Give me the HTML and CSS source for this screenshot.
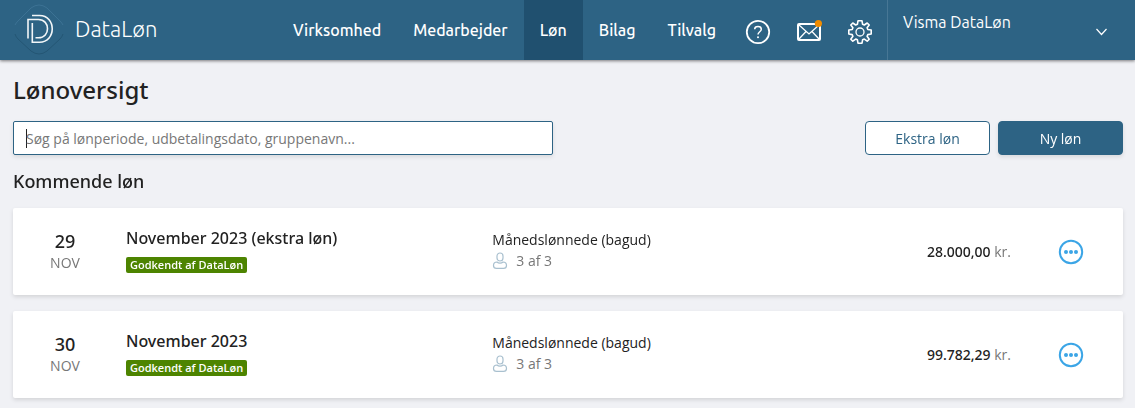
FILE: index.html
```html
<!DOCTYPE html>
<html lang="da">
<head>
    <meta charset="UTF-8">
    <meta name="viewport" content="width=device-width, initial-scale=1.0">
    <title>DataLøn - Lønoversigt</title>
    <link rel="stylesheet" href="styles.css">
</head>
<body>
    <header class="topbar">
        <a href="#" class="brand">
            <svg class="logo" width="50" height="52" viewBox="0 0 50 52" fill="none">
                <path d="M1 21 Q2 19 4 17 L17 4 Q25 -2 33 4 L46 17 Q48 19 49 21" stroke="#3c7294"/>
                <path d="M1 30 Q2 33 4 35 L17 47 Q25 53 33 47 L46 35 Q48 33 49 30" stroke="#245674"/>
                <g stroke="#f2f6f8" stroke-width="1.6">
                    <path d="M14 34.500 V15.500 H24.500 C36.500 15.500 36.500 33.800 24.500 33.800 H21.500"/>
                    <path d="M18 11.500 H25.500 C42.500 11.500 42.500 38.200 25.500 38.200 H18.300 V19"/>
                </g>
            </svg>
            <span class="brand-name">DataLøn</span>
        </a>

        <nav class="menu">
            <a href="#">Virksomhed</a>
            <a href="#">Medarbejder</a>
            <a href="#" class="active">Løn</a>
            <a href="#">Bilag</a>
            <a href="#">Tilvalg</a>
        </nav>

        <div class="tools">
            <button type="button" class="tool" aria-label="Hjælp">
                <svg width="26" height="26" viewBox="0 0 26 26" fill="none" stroke="#fff">
                    <circle cx="13" cy="13" r="11.2" stroke-width="1.8"/>
                    <path d="M9.700 10.300 C9.700 6.700 16.300 6.700 16.300 10.300 C16.300 12.800 13 12.800 13 15.600" stroke-width="1.500"/>
                    <circle cx="13" cy="18.300" r="1" fill="#fff" stroke="none"/>
                </svg>
            </button>
            <button type="button" class="tool" aria-label="Beskeder">
                <svg width="26" height="26" viewBox="0 0 26 26" fill="none" stroke="#fff">
                    <rect x="2" y="5" width="22" height="16" rx="1" stroke-width="2"/>
                    <path d="M3 6 L13 15 L23 6 M3 20 L10 12.500 M23 20 L16 12.500" stroke-width="1.300"/>
                    <circle cx="22.400" cy="4.500" r="3.600" fill="#f08c00" stroke="none"/>
                </svg>
            </button>
            <button type="button" class="tool" aria-label="Indstillinger">
                <svg width="26" height="26" viewBox="0 0 26 26" fill="none" stroke="#fff" stroke-linejoin="round">
                    <path d="M11 1.800 H15 L15.600 5.300 L17.300 6 L20.200 4 L22.200 6 L20.100 8.800 L20.800 10.500 L24.200 11 V15 L20.800 15.600 L20.100 17.200 L22.200 20.200 L20.200 22.200 L17.300 20.100 L15.600 20.800 L15 24.200 H11 L10.400 20.800 L8.700 20.100 L5.800 22.200 L3.800 20.200 L5.900 17.200 L5.200 15.600 L1.800 15 V11 L5.200 10.500 L5.900 8.800 L3.800 6 L5.800 4 L8.700 6 L10.400 5.300 Z" stroke-width="1.600"/>
                    <circle cx="13" cy="13" r="4" stroke-width="1.300"/>
                </svg>
            </button>
        </div>

        <button type="button" class="company">
            <span>Visma DataLøn</span>
            <svg width="13" height="8" viewBox="0 0 13 8" fill="none" stroke="#fff" stroke-width="1.200">
                <path d="M1.500 1 L6.500 6.500 L11.500 1"/>
            </svg>
        </button>
    </header>

    <main class="content">
        <h1>Lønoversigt</h1>

        <div class="toolbar">
            <input type="text" class="search" aria-label="Søg" placeholder="Søg på lønperiode, udbetalingsdato, gruppenavn..." autofocus>
            <div class="actions">
                <button type="button" class="btn">Ekstra løn</button>
                <button type="button" class="btn btn-primary">Ny løn</button>
            </div>
        </div>

        <h2>Kommende løn</h2>

        <div class="payroll">
            <div class="date">
                <span class="day">29</span>
                <span class="month">NOV</span>
            </div>
            <div class="period">
                <h3>November 2023 (ekstra løn)</h3>
                <span class="status">Godkendt af DataLøn</span>
            </div>
            <div class="group">
                <p>Månedslønnede (bagud)</p>
                <p class="count">
                    <svg width="16" height="18" viewBox="0 0 16 18" fill="none" stroke="#a9c0cf" stroke-width="1.200">
                        <rect x="5" y="1" width="6" height="8" rx="3"/>
                        <path d="M5 10 C2.500 10 1.500 11.500 1.500 13.500 C1.500 15.500 2.500 16.400 4.500 16.400 H11.500 C13.500 16.400 14.500 15.500 14.500 13.500 C14.500 11.500 13.500 10 11 10 C9.500 11.500 6.500 11.500 5 10 Z"/>
                    </svg>
                    3 af 3
                </p>
            </div>
            <div class="amount"><strong>28.000,00</strong> kr.</div>
            <button type="button" class="more" aria-label="Flere handlinger">
                <svg width="26" height="26" viewBox="0 0 26 26" fill="#3ba5e6">
                    <circle cx="13" cy="13" r="11.200" fill="none" stroke="#3ba5e6" stroke-width="2"/>
                    <circle cx="8" cy="13" r="2"/>
                    <circle cx="13" cy="13" r="2"/>
                    <circle cx="18" cy="13" r="2"/>
                </svg>
            </button>
        </div>

        <div class="payroll">
            <div class="date">
                <span class="day">30</span>
                <span class="month">NOV</span>
            </div>
            <div class="period">
                <h3>November 2023</h3>
                <span class="status">Godkendt af DataLøn</span>
            </div>
            <div class="group">
                <p>Månedslønnede (bagud)</p>
                <p class="count">
                    <svg width="16" height="18" viewBox="0 0 16 18" fill="none" stroke="#a9c0cf" stroke-width="1.200">
                        <rect x="5" y="1" width="6" height="8" rx="3"/>
                        <path d="M5 10 C2.500 10 1.500 11.500 1.500 13.500 C1.500 15.500 2.500 16.400 4.500 16.400 H11.500 C13.500 16.400 14.500 15.500 14.500 13.500 C14.500 11.500 13.500 10 11 10 C9.500 11.500 6.500 11.500 5 10 Z"/>
                    </svg>
                    3 af 3
                </p>
            </div>
            <div class="amount"><strong>99.782,29</strong> kr.</div>
            <button type="button" class="more" aria-label="Flere handlinger">
                <svg width="26" height="26" viewBox="0 0 26 26" fill="#3ba5e6">
                    <circle cx="13" cy="13" r="11.200" fill="none" stroke="#3ba5e6" stroke-width="2"/>
                    <circle cx="8" cy="13" r="2"/>
                    <circle cx="13" cy="13" r="2"/>
                    <circle cx="18" cy="13" r="2"/>
                </svg>
            </button>
        </div>
    </main>
</body>
</html>
```
FILE: styles.css
```css
* {
    box-sizing: border-box;
}

body {
    margin: 0;
    font-family: "Open Sans", sans-serif;
    font-size: 14px;
    color: #222;
    background-color: #f0f1f5;
}

h1, h2, h3, p {
    margin: 0;
}

h1, h2, h3, .day, .amount strong {
    font-family: "Noto Sans", sans-serif;
    font-weight: 500;
}

button {
    font-family: inherit;
    cursor: pointer;
}

.topbar {
    display: flex;
    height: 60px;
    background-color: #2d6384;
    box-shadow: 0 1px 3px rgba(0, 0, 0, 0.5);
    font-family: Ubuntu, "Noto Sans", sans-serif;
}

.topbar svg {
    display: block;
}

.brand {
    display: flex;
    align-items: center;
    gap: 11px;
    padding-left: 14px;
    color: #fff;
    text-decoration: none;
}

.brand-name {
    font-size: 22px;
    line-height: 24px;
    font-weight: 300;
    padding-bottom: 3px;
}

.menu {
    display: flex;
    margin-left: auto;
}

.menu a {
    padding: 0 16px;
    line-height: 60px;
    font-size: 16px;
    font-weight: 500;
    color: #fff;
    text-decoration: none;
}

.menu .active {
    background-color: #20506f;
}

.tools {
    display: flex;
    align-items: center;
    gap: 25px;
    padding: 4px 14px 0 13px;
}

.tool,
.more {
    padding: 0;
    border: none;
    background: none;
}

.company {
    display: flex;
    justify-content: space-between;
    width: 248px;
    padding: 13px 27px 0 15px;
    border: none;
    border-left: 1px solid #477795;
    background: none;
    font-size: 16px;
    color: #fff;
}

.company svg {
    margin-top: 15px;
}

.content {
    padding: 12px 12px 11px 13px;
}

h1 {
    font-size: 24px;
    line-height: 36px;
}

.toolbar {
    display: flex;
    justify-content: space-between;
    margin-top: 13px;
}

.search {
    width: 540px;
    height: 34px;
    padding: 0 12px;
    border: 1px solid #2d6384;
    border-radius: 2px;
    outline: none;
    background: linear-gradient(#222, #222) 12px center / 1px 19px no-repeat #fff;
    box-shadow: 0 2px 4px rgba(0, 0, 0, 0.1);
    font-family: inherit;
    font-size: 14px;
}

.search::placeholder {
    color: #777;
}

.actions {
    display: flex;
    gap: 8px;
}

.btn {
    width: 125px;
    height: 34px;
    border: 1px solid #2d6384;
    border-radius: 4px;
    background-color: #fff;
    font-size: 14px;
    color: #2d6384;
}

.btn-primary {
    background-color: #2d6384;
    box-shadow: 0 2px 4px rgba(0, 0, 0, 0.1);
    font-weight: 500;
    color: #fff;
}

h2 {
    margin: 13px 0;
    font-size: 18px;
    line-height: 27px;
}

.payroll {
    display: grid;
    grid-template-columns: 104px 33% 1fr 120px 112px;
    align-items: center;
    height: 87px;
    margin-bottom: 16px;
    border-radius: 2px;
    background-color: #fff;
    box-shadow: 0 2px 4px rgba(0, 0, 0, 0.12);
}

.payroll:last-child {
    margin-bottom: 0;
}

.date {
    text-align: center;
}

.day,
.month {
    display: block;
    line-height: 21px;
}

.day {
    font-size: 18px;
}

.month {
    color: #777;
}

.period,
.group {
    padding: 0 0 3px 9px;
}

.period h3 {
    margin-bottom: 9px;
    font-size: 16px;
    line-height: 20px;
}

.status {
    display: block;
    width: fit-content;
    padding: 0 4px;
    border-radius: 2px;
    background-color: #4d8400;
    font-size: 11px;
    line-height: 16px;
    font-weight: 600;
    color: #fff;
}

.group p {
    line-height: 21px;
}

.group .count {
    display: flex;
    align-items: center;
    gap: 8px;
    color: #777;
}

.amount {
    text-align: right;
    color: #777;
}

.amount strong {
    color: #222;
}

.more {
    justify-self: center;
    margin-left: 8px;
}

.more svg {
    display: block;
}
```
